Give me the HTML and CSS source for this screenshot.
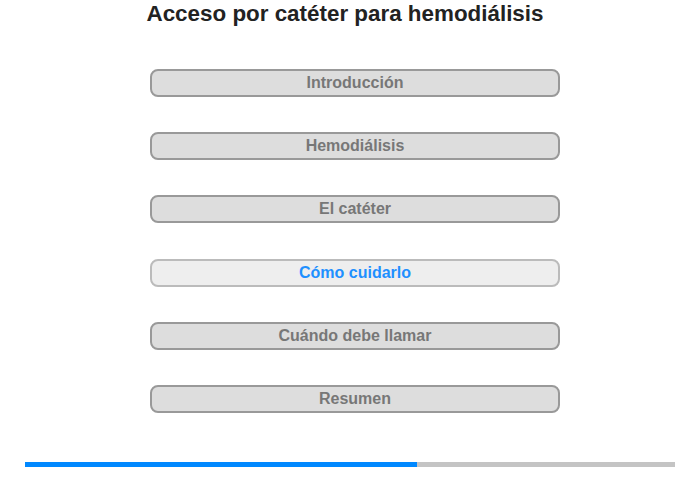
FILE: index.html
```html
<!DOCTYPE html>
<html lang="es">
  <head>
    <meta charset="UTF-8" />
    <meta name="viewport" content="width=device-width, initial-scale=1.0" />
    <title>Acceso por catéter para hemodiálisis</title>
    <link rel="stylesheet" href="styles.css">
  </head>
  <body>
    <div class="page">
      <h1 class="title">Acceso por catéter para hemodiálisis</h1>

      <!-- Chapter menu -->
      <div class="menu">
        <button class="chapter">Introducción</button>
        <button class="chapter">Hemodiálisis</button>
        <button class="chapter">El catéter</button>
        <button class="chapter current">Cómo cuidarlo</button>
        <button class="chapter">Cuándo debe llamar</button>
        <button class="chapter">Resumen</button>
      </div>

      <!-- Progress -->
      <div class="progress">
        <div class="progress-fill" style="width: 60.3%"></div>
      </div>
    </div>
  </body>
</html>
```

FILE: styles.css
```css
/* Page */
body {
  margin: 0;
  padding: 0;
  font-family: 'Liberation Sans', Arial, sans-serif;
  background-color: #fff;
}

.page {
  width: 700px;
  height: 480px;
  display: flex;
  flex-direction: column;
}

.title {
  margin: 0;
  padding: 0 10px 0 0;
  font-size: 22.4px;
  line-height: 27px;
  font-weight: bold;
  color: #222;
  text-align: center;
}

/* Chapter buttons */
.menu {
  display: flex;
  flex-direction: column;
  gap: 35.2px;
  margin: 42px 0 0 150px;
  width: 410px;
}

.chapter {
  height: 28px;
  padding: 0;
  background-color: #ddd;
  border: 2px solid #999;
  border-radius: 8px;
  font-family: 'Liberation Sans', Arial, sans-serif;
  font-size: 16px;
  font-weight: bold;
  color: #777;
  cursor: pointer;
}

.chapter.current {
  background-color: #eee;
  border-color: #bbb;
  color: #1e90ff;
}

/* Progress bar */
.progress {
  margin: 49px 0 0 25px;
  width: 650px;
  height: 5px;
  background-color: #c4c4c4;
}

.progress-fill {
  height: 100%;
  background-color: #0088ff;
}
```
